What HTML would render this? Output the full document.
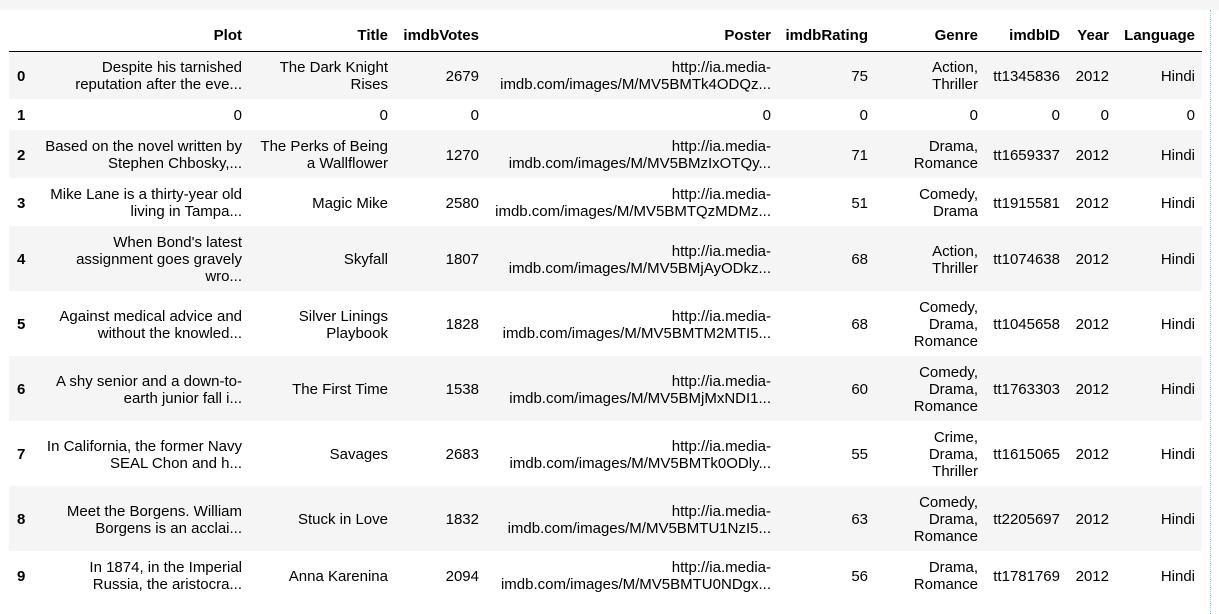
<!DOCTYPE html>
<html><head><meta charset="utf-8"><style>
html,body{margin:0;padding:0;background:#fff;width:1219px;height:614px;overflow:hidden}
.top{position:absolute;left:0;top:0;width:1219px;height:10px;background:#f5f5f5}
.sb{position:absolute;left:1210px;top:10px;width:0;height:604px;border-left:1px dotted #9cc3e8}
table{position:absolute;left:9px;top:11px;border-collapse:collapse;table-layout:fixed;width:1193px;font-family:"Liberation Sans",Arial,sans-serif;font-size:15px;line-height:17px;color:#000}
td,th{padding:2px 7px 0 7px;text-align:right;vertical-align:middle;white-space:nowrap;overflow:hidden}
th{font-weight:bold}
thead tr{height:40px}
thead th{border-bottom:1px solid #000;padding-top:10px}
tbody th{text-align:left;padding-left:8px}
tbody tr:nth-child(odd){background:#f5f5f5}
</style></head><body>
<div class="top"></div><div class="sb"></div>
<table>
<colgroup><col style="width:27px"><col style="width:213px"><col style="width:146px"><col style="width:91px"><col style="width:292px"><col style="width:97px"><col style="width:110px"><col style="width:82px"><col style="width:49px"><col style="width:86px"></colgroup>
<thead><tr><th></th><th>Plot</th><th>Title</th><th>imdbVotes</th><th>Poster</th><th>imdbRating</th><th>Genre</th><th>imdbID</th><th>Year</th><th>Language</th></tr></thead>
<tbody>
<tr style="height:48px"><th>0</th><td>Despite his tarnished<br>reputation after the eve...</td><td>The Dark Knight<br>Rises</td><td>2679</td><td>http://ia.media-<br>imdb.com/images/M/MV5BMTk4ODQz...</td><td>75</td><td>Action,<br>Thriller</td><td>tt1345836</td><td>2012</td><td>Hindi</td></tr>
<tr style="height:31px"><th>1</th><td>0</td><td>0</td><td>0</td><td>0</td><td>0</td><td>0</td><td>0</td><td>0</td><td>0</td></tr>
<tr style="height:48px"><th>2</th><td>Based on the novel written by<br>Stephen Chbosky,...</td><td>The Perks of Being<br>a Wallflower</td><td>1270</td><td>http://ia.media-<br>imdb.com/images/M/MV5BMzIxOTQy...</td><td>71</td><td>Drama,<br>Romance</td><td>tt1659337</td><td>2012</td><td>Hindi</td></tr>
<tr style="height:48px"><th>3</th><td>Mike Lane is a thirty-year old<br>living in Tampa...</td><td>Magic Mike</td><td>2580</td><td>http://ia.media-<br>imdb.com/images/M/MV5BMTQzMDMz...</td><td>51</td><td>Comedy,<br>Drama</td><td>tt1915581</td><td>2012</td><td>Hindi</td></tr>
<tr style="height:65px"><th>4</th><td>When Bond's latest<br>assignment goes gravely<br>wro...</td><td>Skyfall</td><td>1807</td><td>http://ia.media-<br>imdb.com/images/M/MV5BMjAyODkz...</td><td>68</td><td>Action,<br>Thriller</td><td>tt1074638</td><td>2012</td><td>Hindi</td></tr>
<tr style="height:65px"><th>5</th><td>Against medical advice and<br>without the knowled...</td><td>Silver Linings<br>Playbook</td><td>1828</td><td>http://ia.media-<br>imdb.com/images/M/MV5BMTM2MTI5...</td><td>68</td><td>Comedy,<br>Drama,<br>Romance</td><td>tt1045658</td><td>2012</td><td>Hindi</td></tr>
<tr style="height:65px"><th>6</th><td>A shy senior and a down-to-<br>earth junior fall i...</td><td>The First Time</td><td>1538</td><td>http://ia.media-<br>imdb.com/images/M/MV5BMjMxNDI1...</td><td>60</td><td>Comedy,<br>Drama,<br>Romance</td><td>tt1763303</td><td>2012</td><td>Hindi</td></tr>
<tr style="height:65px"><th>7</th><td>In California, the former Navy<br>SEAL Chon and h...</td><td>Savages</td><td>2683</td><td>http://ia.media-<br>imdb.com/images/M/MV5BMTk0ODly...</td><td>55</td><td>Crime,<br>Drama,<br>Thriller</td><td>tt1615065</td><td>2012</td><td>Hindi</td></tr>
<tr style="height:65px"><th>8</th><td>Meet the Borgens. William<br>Borgens is an acclai...</td><td>Stuck in Love</td><td>1832</td><td>http://ia.media-<br>imdb.com/images/M/MV5BMTU1NzI5...</td><td>63</td><td>Comedy,<br>Drama,<br>Romance</td><td>tt2205697</td><td>2012</td><td>Hindi</td></tr>
<tr style="height:48px"><th>9</th><td>In 1874, in the Imperial<br>Russia, the aristocra...</td><td>Anna Karenina</td><td>2094</td><td>http://ia.media-<br>imdb.com/images/M/MV5BMTU0NDgx...</td><td>56</td><td>Drama,<br>Romance</td><td>tt1781769</td><td>2012</td><td>Hindi</td></tr>
</tbody></table>
</body></html>
